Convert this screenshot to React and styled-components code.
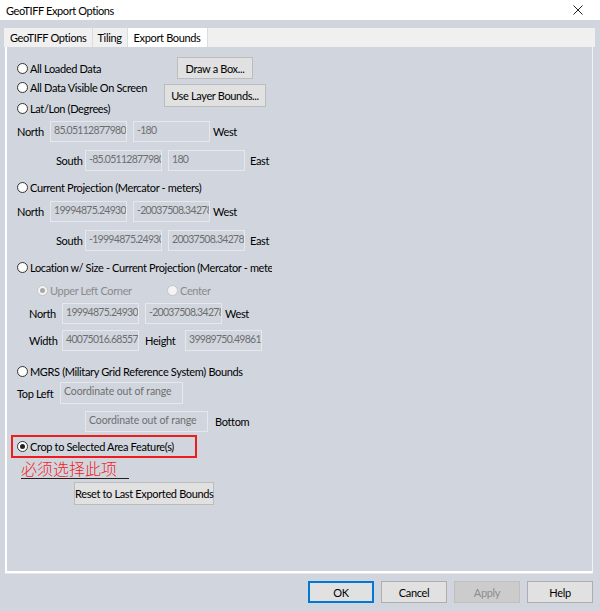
import React from "react";
import styled, { createGlobalStyle } from "styled-components";

/*--- 스타일 ---*/
const GlobalStyle = createGlobalStyle`
  html, body {
    margin: 0;
    padding: 0;
    background: #d1d6de;
  }
  body {
    font-family: Lato, "Noto Sans CJK SC", sans-serif;
    font-size: 11px;
    letter-spacing: -0.35px;
    color: #000;
  }
`;

const Window = styled.div`
  width: 600px;
  height: 611px;
  background: #d1d6de;
  display: flex;
  flex-direction: column;
  overflow: hidden;
`;

const TitleBar = styled.div`
  height: 20px;
  background: #fff;
  display: flex;
  align-items: center;
  justify-content: space-between;
  padding: 0 17px 0 6px;
  font-size: 11px;
  letter-spacing: -0.4px;
`;

const TabStrip = styled.div`
  margin: 8px 5px 0 4px;
  height: 19px;
  background: #f0f0f0;
  display: flex;
  padding-left: 1px;
`;

const Tab = styled.div`
  height: 19px;
  line-height: 19px;
  padding: 0 ${(p) => (p.$active ? 6 : 5)}px;
  background: ${(p) => (p.$active ? "#fff" : "#f0f0f0")};
  border-right: 1px solid #dcdcdc;
  white-space: nowrap;
`;

const Panel = styled.div`
  box-sizing: border-box;
  height: 526px;
  margin: 0 7px 0 5px;
  border-left: 2px solid #fff;
  border-bottom: 2px solid #fff;
  border-right: 1px solid #f2f3f5;
  box-shadow: 0 1px 0 #e4e6ea;
  padding: 10px 0 0 10px;
  display: flex;
  flex-direction: column;
`;

const TopGroup = styled.div`
  display: flex;
`;

const RadioCol = styled.div`
  width: 147px;
  padding-top: 1px;
  display: flex;
  flex-direction: column;
`;

const ButtonCol = styled.div`
  width: 102px;
  display: flex;
  flex-direction: column;
  align-items: center;
  gap: 5px;
`;

const RadioRow = styled.label`
  display: flex;
  align-items: center;
  height: 20px;
  margin-top: ${(p) => p.$mt || 0}px;
  white-space: nowrap;
  color: ${(p) => (p.$disabled ? "#8a8a8a" : "#000")};
  width: ${(p) => (p.$w ? p.$w + "px" : "auto")};
  overflow: hidden;
`;

const Dot = styled.span`
  box-sizing: border-box;
  flex: none;
  width: 11px;
  height: 11px;
  border-radius: 50%;
  border: 1px solid ${(p) => (p.$disabled ? "#c2c4c8" : "#333")};
  background: ${(p) => (p.$disabled ? "#f4f4f4" : "#fff")};
  margin-right: 2px;
  display: flex;
  align-items: center;
  justify-content: center;
  &::after {
    content: "";
    width: 5px;
    height: 5px;
    border-radius: 50%;
    background: ${(p) => (p.$disabled ? "#a8a8a8" : "#222")};
    display: ${(p) => (p.$checked ? "block" : "none")};
  }
`;

const Button = styled.button`
  box-sizing: border-box;
  height: ${(p) => p.$h || 22}px;
  width: ${(p) => p.$w}px;
  padding: 0;
  font-family: inherit;
  font-size: 11px;
  letter-spacing: inherit;
  white-space: nowrap;
  color: #000;
  background: #e1e1e1;
  border: 1px solid #bcbcbc;
  outline: none;
`;

const FieldRow = styled.div`
  display: flex;
  align-items: center;
  height: ${(p) => p.$h || 21}px;
  margin-top: ${(p) => p.$mt || 0}px;
  padding-left: ${(p) => p.$pl || 0}px;
`;

const RowGroup = styled.div`
  display: flex;
  align-items: center;
  height: 20px;
  margin-top: ${(p) => p.$mt || 0}px;
  padding-left: ${(p) => p.$pl || 0}px;
`;

const Label = styled.span`
  flex: none;
  width: ${(p) => (p.$w ? p.$w + "px" : "auto")};
  margin-left: ${(p) => p.$ml || 0}px;
  white-space: nowrap;
`;

const Field = styled.div`
  box-sizing: border-box;
  flex: none;
  width: ${(p) => p.$w || 77}px;
  height: 100%;
  margin-left: ${(p) => p.$ml || 0}px;
  border: 1px solid #e6e8ec;
  color: #6e6e6e;
  font-size: 10.5px;
  letter-spacing: ${(p) => (p.$text ? "-0.1px" : "-0.7px")};
  line-height: 15px;
  padding: 1px 0 0 3px;
  white-space: nowrap;
  overflow: hidden;
`;

const Highlight = styled.div`
  box-sizing: border-box;
  width: 186px;
  height: 23px;
  margin: 3px 0 0 -6px;
  border: 2px solid #ee1c1c;
  padding-left: 4px;
  display: flex;
  align-items: center;
`;

const Note = styled.div`
  margin: 1px 0 0 4px;
  height: 21px;
  display: flex;
`;

const NoteText = styled.span`
  font-family: "Noto Sans CJK SC", sans-serif;
  font-size: 16px;
  font-weight: 300;
  line-height: 19px;
  color: #f21d1d;
  width: 108px;
  border-bottom: 1px solid #222;
  height: 19px;
  letter-spacing: 0;
`;

const ResetWrap = styled.div`
  margin: 2px 0 0 57px;
`;

const Footer = styled.div`
  display: flex;
  justify-content: flex-end;
  gap: 7px;
  padding: 8px 7px 0 0;
`;

const DlgButton = styled.button`
  box-sizing: border-box;
  width: 66px;
  height: 22px;
  padding: 0;
  font-family: inherit;
  font-size: 11px;
  letter-spacing: inherit;
  color: ${(p) => (p.$disabled ? "#8d8d8d" : "#000")};
  background: ${(p) => (p.$disabled ? "#cccccc" : "#e1e1e1")};
  border: 1px solid ${(p) => (p.$primary ? "#0078d7" : p.$disabled ? "#bfbfbf" : "#adadad")};
  box-shadow: ${(p) => (p.$primary ? "inset 0 0 0 1px #0078d7" : "none")};
  outline: none;
`;

/*--- 출력 ---*/
const Radio = ({ children, checked, disabled, mt, w }) => (
  <RadioRow $mt={mt} $disabled={disabled} $w={w}>
    <Dot $checked={checked} $disabled={disabled} />
    {children}
  </RadioRow>
);

const App = () => {
  return (
    <Window>
      <GlobalStyle />
      <TitleBar>
        <span>GeoTIFF Export Options</span>
        <svg width="10" height="10" viewBox="0 0 10 10">
          <path d="M0.5 0.5 L9.5 9.5 M9.5 0.5 L0.5 9.5" stroke="#222" strokeWidth="1" />
        </svg>
      </TitleBar>
      <TabStrip>
        <Tab>GeoTIFF Options</Tab>
        <Tab>Tiling</Tab>
        <Tab $active>Export Bounds</Tab>
      </TabStrip>
      <Panel>
        <TopGroup>
          <RadioCol>
            <Radio>All Loaded Data</Radio>
            <Radio mt={-1}>All Data Visible On Screen</Radio>
            <Radio mt={1}>Lat/Lon (Degrees)</Radio>
          </RadioCol>
          <ButtonCol>
            <Button $w={76}>Draw a Box...</Button>
            <Button $w={102} $h={23}>Use Layer Bounds...</Button>
          </ButtonCol>
        </TopGroup>

        <FieldRow $mt={3}>
          <Label $w={33}>North</Label>
          <Field>85.05112877980</Field>
          <Field $ml={6}>-180</Field>
          <Label $ml={3}>West</Label>
        </FieldRow>
        <FieldRow $mt={8} $pl={39}>
          <Label $w={29}>South</Label>
          <Field>-85.05112877980</Field>
          <Field $ml={6}>180</Field>
          <Label $ml={5}>East</Label>
        </FieldRow>

        <Radio mt={6}>Current Projection (Mercator - meters)</Radio>
        <FieldRow $mt={4}>
          <Label $w={33}>North</Label>
          <Field>19994875.24930</Field>
          <Field $ml={6}>-20037508.34278</Field>
          <Label $ml={3}>West</Label>
        </FieldRow>
        <FieldRow $mt={8} $pl={39}>
          <Label $w={29}>South</Label>
          <Field>-19994875.24930</Field>
          <Field $ml={6}>20037508.34278</Field>
          <Label $ml={5}>East</Label>
        </FieldRow>

        <Radio mt={6} w={255}>Location w/ Size - Current Projection (Mercator - meters)</Radio>
        <RowGroup $mt={3} $pl={20}>
          <Radio checked disabled w={130}>Upper Left Corner</Radio>
          <Radio disabled>Center</Radio>
        </RowGroup>
        <FieldRow $mt={3} $pl={12}>
          <Label $w={33}>North</Label>
          <Field>19994875.24930</Field>
          <Field $ml={6}>-20037508.34278</Field>
          <Label $ml={3}>West</Label>
        </FieldRow>
        <FieldRow $mt={6} $pl={12}>
          <Label $w={33}>Width</Label>
          <Field>40075016.68557</Field>
          <Label $w={40} $ml={6}>Height</Label>
          <Field>39989750.49861</Field>
        </FieldRow>

        <Radio mt={10}>MGRS (Military Grid Reference System) Bounds</Radio>
        <FieldRow $mt={1} $h={22}>
          <Label $w={43}>Top Left</Label>
          <Field $w={123} $text>Coordinate out of range</Field>
        </FieldRow>
        <FieldRow $mt={7} $pl={68}>
          <Field $w={123} $text>Coordinate out of range</Field>
          <Label $ml={7}>Bottom</Label>
        </FieldRow>

        <Highlight>
          <Radio checked>Crop to Selected Area Feature(s)</Radio>
        </Highlight>
        <Note>
          <NoteText>必须选择此项</NoteText>
        </Note>
        <ResetWrap>
          <Button $w={140} $h={23}>Reset to Last Exported Bounds</Button>
        </ResetWrap>
      </Panel>
      <Footer>
        <DlgButton $primary>OK</DlgButton>
        <DlgButton>Cancel</DlgButton>
        <DlgButton $disabled>Apply</DlgButton>
        <DlgButton>Help</DlgButton>
      </Footer>
    </Window>
  );
};

export default App;
